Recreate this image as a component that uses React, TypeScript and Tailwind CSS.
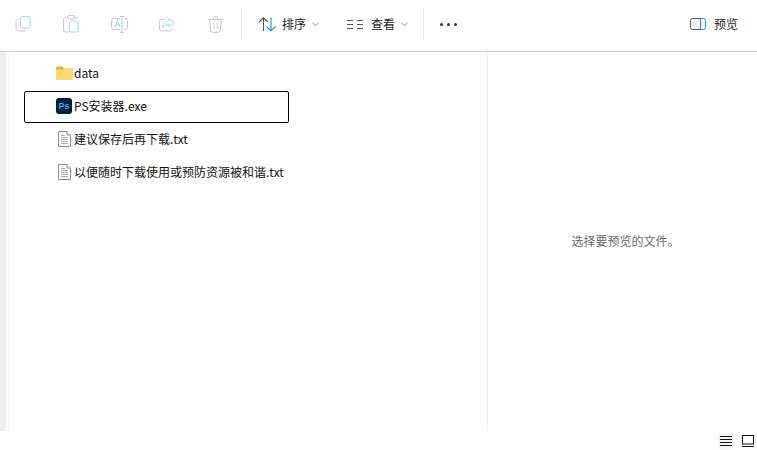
const font = "[font-family:'Noto_Sans_CJK_SC','Liberation_Sans',sans-serif]";

function CopyIcon() {
  return (
    <svg width="16" height="16" viewBox="0 0 16 16" fill="none" strokeWidth="1">
      <path d="M4.5 3.5 H3 a2 2 0 0 0 -2 2 V13 a2 2 0 0 0 2 2 h6 a2 2 0 0 0 2 -2 V12.5" stroke="#c9c9c9" />
      <rect x="5.5" y="0.5" width="9.5" height="11.5" rx="2" stroke="#a9d3f5" />
    </svg>
  );
}

function PasteIcon() {
  return (
    <svg width="16" height="18" viewBox="0 0 16 18" fill="none" strokeWidth="1">
      <path d="M5 2.5 H2.5 a2 2 0 0 0 -2 2 V15 a2 2 0 0 0 2 2 H6 M11 2.5 h1 a2 2 0 0 1 2 2 V5" stroke="#c9c9c9" />
      <rect x="4.5" y="0.5" width="7" height="3.5" rx="1.5" stroke="#c9c9c9" />
      <rect x="6.5" y="6" width="8.5" height="11" rx="1.5" stroke="#a9d3f5" />
    </svg>
  );
}

function RenameIcon() {
  return (
    <svg width="17" height="17" viewBox="0 0 17 17" fill="none" strokeWidth="1">
      <path d="M9 2.5 H3 a2.5 2.5 0 0 0 -2.5 2.5 V11 a2.5 2.5 0 0 0 2.5 2.5 H9 M13 2.5 h1 a2.5 2.5 0 0 1 2.5 2.5 V11 a2.5 2.5 0 0 1 -2.5 2.5 H13" stroke="#c9c9c9" />
      <path d="M9 0.5 h2 h2 M11 0.5 V16.5 M9 16.5 h4 M3.8 11 L6.5 4.5 L9.2 11 M4.8 9 H8.2" stroke="#a9d3f5" />
    </svg>
  );
}

function ShareIcon() {
  return (
    <svg width="16" height="15" viewBox="0 0 16 15" fill="none" strokeWidth="1">
      <path d="M6 2.5 H2.5 a2 2 0 0 0 -2 2 V12 a2 2 0 0 0 2 2 H11 a2 2 0 0 0 2 -2 V11" stroke="#c9c9c9" />
      <path d="M10 1 L15.5 5.5 L10 10 V7.5 C7 7.5 5 8.5 3.5 11 C3.5 7 6 4 10 3.5 Z" stroke="#a9d3f5" />
    </svg>
  );
}

function TrashIcon() {
  return (
    <svg width="15" height="17" viewBox="0 0 15 17" fill="none" stroke="#c9c9c9" strokeWidth="1">
      <path d="M0 3.5 H15 M5.5 3.5 V2 a1.5 1.5 0 0 1 1.5 -1.5 h1 a1.5 1.5 0 0 1 1.5 1.5 V3.5" />
      <path d="M1.5 3.5 L2.7 14.5 a2 2 0 0 0 2 1.8 h5.6 a2 2 0 0 0 2 -1.8 L13.5 3.5" />
      <path d="M6 7 V13 M9 7 V13" />
    </svg>
  );
}

function SortIcon() {
  return (
    <svg width="18" height="15" viewBox="0 0 18 15" fill="none" strokeWidth="1.1">
      <path d="M1 5 L5.5 0.8 L10 5 M5.5 1 V14" stroke="#555" />
      <path d="M8.5 9.5 L13 13.8 L17.5 9.5 M13 0.5 V13.5" stroke="#1a86d9" />
    </svg>
  );
}

function ViewIcon() {
  return (
    <svg width="16" height="11" viewBox="0 0 16 11" fill="none" stroke="#555" strokeWidth="1">
      <path d="M0 1.5 H6 M0 5.5 H6 M0 9.5 H6 M10 1.5 H16 M10 5.5 H16 M10 9.5 H16" />
    </svg>
  );
}

function Chevron() {
  return (
    <svg width="7" height="5" viewBox="0 0 7 5" fill="none" stroke="#8a8a8a" strokeWidth="1">
      <path d="M0.5 0.8 L3.5 3.8 L6.5 0.8" />
    </svg>
  );
}

function PreviewIcon() {
  return (
    <svg width="16" height="12" viewBox="0 0 16 12" fill="none" strokeWidth="1">
      <path d="M10.5 0.5 H2.5 a2 2 0 0 0 -2 2 V9.5 a2 2 0 0 0 2 2 H10.5" stroke="#555" fill="#f7f7f7" />
      <path d="M10.5 0.5 H13.5 a2 2 0 0 1 2 2 V9.5 a2 2 0 0 1 -2 2 H10.5 Z" stroke="#1a86d9" />
    </svg>
  );
}

function FolderIcon() {
  return (
    <svg width="17" height="14" viewBox="0 0 17 14">
      <path d="M0 2 a1.5 1.5 0 0 1 1.5 -1.5 H6 L8 2.5 H17 V5 H0 Z" fill="#f0b429" />
      <path d="M0 3.5 H7.5 L9 2.8 H15.5 A1.5 1.5 0 0 1 17 4.3 V12.5 A1.5 1.5 0 0 1 15.5 14 H1.5 A1.5 1.5 0 0 1 0 12.5 Z" fill="#ffd970" />
    </svg>
  );
}

function PsIcon() {
  return (
    <div className="flex h-4 w-4 items-center justify-center rounded-[3px] bg-[#001e36] text-[9px] leading-none font-bold text-[#31a8ff] [font-family:'Liberation_Sans',sans-serif]">
      Ps
    </div>
  );
}

function TextFileIcon() {
  return (
    <svg className="ml-[2px]" width="13" height="16" viewBox="0 0 13 16" fill="#fff" stroke="#8c8c8c" strokeWidth="1">
      <path d="M0.5 0.5 H9 L12.5 4 V15.5 H0.5 Z" />
      <path d="M9 0.5 V4 H12.5" />
      <path d="M3 4.5 H7 M3 6.5 H10 M3 8.5 H10 M3 10.5 H10 M3 12.5 H10" stroke="#a8a8a8" />
    </svg>
  );
}

function ToolSlot({ children, width }: { children: React.ReactNode; width: string }) {
  return <div className={`flex items-center justify-center ${width}`}>{children}</div>;
}

function FileRow({ icon, name, selected }: { icon: React.ReactNode; name: string; selected?: boolean }) {
  return (
    <div
      className={`mb-px flex h-[32px] w-[265px] items-center rounded-[2px] pb-[2px] pl-[31px] ${
        selected ? "border border-black" : "border border-transparent"
      }`}
    >
      <div className="flex w-[18px] justify-start">{icon}</div>
      <span className="text-[12px] whitespace-nowrap text-[#111]">{name}</span>
    </div>
  );
}

export default function App() {
  return (
    <div className={`flex h-[450px] w-[757px] flex-col overflow-hidden bg-white ${font}`}>
      <header className="flex h-[52px] shrink-0 items-center border-b border-[#c5cfdb] pb-[3px]">
        <div className="flex items-center">
          <ToolSlot width="w-[46px]"><CopyIcon /></ToolSlot>
          <ToolSlot width="w-[49px]"><PasteIcon /></ToolSlot>
          <ToolSlot width="w-[48px]"><RenameIcon /></ToolSlot>
          <ToolSlot width="w-[48px]"><ShareIcon /></ToolSlot>
          <ToolSlot width="w-[48px]"><TrashIcon /></ToolSlot>
        </div>
        <div className="ml-[2px] h-[32px] w-px bg-[#ececec]" />
        <div className="ml-[16px] flex items-center">
          <SortIcon />
          <span className="ml-[6px] text-[12px] text-[#222]">排序</span>
          <span className="ml-[6px]"><Chevron /></span>
        </div>
        <div className="ml-[28px] flex items-center">
          <ViewIcon />
          <span className="ml-[8px] text-[12px] text-[#222]">查看</span>
          <span className="ml-[6px]"><Chevron /></span>
        </div>
        <div className="ml-[15px] h-[32px] w-px bg-[#ececec]" />
        <div className="ml-[16px] flex items-center gap-[4px]">
          <span className="h-[3px] w-[3px] rounded-full bg-[#333]" />
          <span className="h-[3px] w-[3px] rounded-full bg-[#333]" />
          <span className="h-[3px] w-[3px] rounded-full bg-[#333]" />
        </div>
        <div className="ml-auto flex items-center pr-[19px]">
          <PreviewIcon />
          <span className="ml-[8px] text-[12px] text-[#222]">预览</span>
        </div>
      </header>

      <div className="flex h-[379px] shrink-0">
        <div className="w-[6px] bg-[#eeeeee]" />
        <div className="w-[2px]" />
        <div className="w-px bg-[#f5f5f5]" />
        <main className="w-[479px] shrink-0 border-r border-[#f0f0f0] pt-[6px] pl-[15px]">
          <FileRow icon={<FolderIcon />} name="data" />
          <FileRow icon={<PsIcon />} name="PS安装器.exe" selected />
          <FileRow icon={<TextFileIcon />} name="建议保存后再下载.txt" />
          <FileRow icon={<TextFileIcon />} name="以便随时下载使用或预防资源被和谐.txt" />
        </main>
        <aside className="flex flex-1 items-center justify-center pb-[1px] pl-[6px] text-[12px] text-[#6b6b6b]">
          选择要预览的文件。
        </aside>
      </div>

      <footer className="flex flex-1 items-center justify-end pt-[1px] pr-[2px]">
        <div className="flex h-[16px] w-[16px] items-center justify-center rounded-[2px] bg-[#f5f5f5]">
          <svg width="12" height="11" viewBox="0 0 12 11" fill="none" stroke="#111" strokeWidth="1">
            <path d="M0 0.5 H12 M0 3.5 H12 M0 6.5 H12 M0 9.5 H12" />
          </svg>
        </div>
        <div className="ml-[5px] flex h-[16px] w-[16px] items-center justify-end pr-px">
          <svg width="12" height="12" viewBox="0 0 12 12" fill="none" stroke="#111" strokeWidth="1">
            <rect x="0.5" y="0.5" width="11" height="8.5" />
            <path d="M0 11.5 H12" />
          </svg>
        </div>
      </footer>
    </div>
  );
}
